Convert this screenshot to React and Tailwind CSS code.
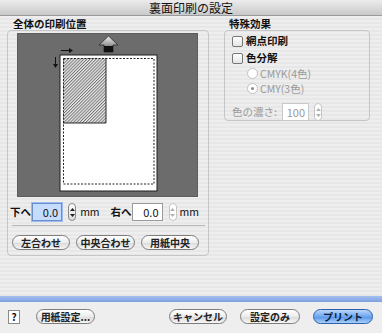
import React from "react";

const font = { fontFamily: '"Noto Sans CJK JP", "Liberation Sans", sans-serif' };

const Stepper = ({ dim }) => (
  <div
    className={`flex h-[18px] w-[8px] flex-col items-center justify-center gap-[3px] rounded-[4px] border ${
      dim ? "border-[#c4c4c4] bg-white" : "border-[#8a8a8a] bg-[linear-gradient(#fdfdfd,#dcdcdc)]"
    }`}
  >
    <svg width="5" height="3" viewBox="0 0 5 3">
      <path d="M0 3 L2.5 0 L5 3Z" fill={dim ? "#b0b0b0" : "#222"} />
    </svg>
    <svg width="5" height="3" viewBox="0 0 5 3">
      <path d="M0 0 L5 0 L2.5 3Z" fill={dim ? "#b0b0b0" : "#222"} />
    </svg>
  </div>
);

const Pill = ({ children, w, blue }) => (
  <button
    className={`flex h-[15px] items-center justify-center rounded-full border text-[10px] font-bold leading-none ${
      blue
        ? "border-[#2f5fa8] bg-[linear-gradient(#b9d6fb,#6fa6ee_50%,#5a98ea_55%,#a8d0fb)] text-[#0b1d3d]"
        : "border-[#7d7d7d] bg-[linear-gradient(#ffffff,#ececec_50%,#dcdcdc_55%,#f6f6f6)] text-[#222]"
    } ${w}`}
  >
    {children}
  </button>
);

const Preview = () => (
  <svg width="181" height="164" viewBox="0 0 181 164">
    <defs>
      <pattern id="hatch" width="2.2" height="2.2" patternUnits="userSpaceOnUse" patternTransform="rotate(45)">
        <rect width="2.2" height="2.2" fill="#ececec" />
        <line x1="0.5" y1="0" x2="0.5" y2="2.2" stroke="#6a6a6a" strokeWidth="0.9" />
      </pattern>
      <linearGradient id="arrow" x1="0" y1="0" x2="0" y2="1">
        <stop offset="0" stopColor="#f4f4f4" />
        <stop offset="0.55" stopColor="#9a9a9a" />
        <stop offset="1" stopColor="#1c1c1c" />
      </linearGradient>
    </defs>
    <rect x="42" y="21" width="97" height="136" fill="#fff" stroke="#1e1e1e" strokeWidth="1" />
    <rect x="45" y="24" width="43" height="65" fill="url(#hatch)" />
    <path d="M88 24 V89 H45" fill="none" stroke="#2a2a2a" strokeWidth="1" />
    <rect x="45.5" y="24.5" width="90.5" height="125.5" fill="none" stroke="#222" strokeWidth="1" strokeDasharray="2 1.5" />
    <path d="M90.5 2 L100 11 L95 11 L95 18 L86 18 L86 11 L81 11 Z" fill="url(#arrow)" stroke="#2a2a2a" strokeWidth="0.8" />
    <rect x="86" y="12" width="9" height="6" fill="#111" />
    <path d="M43 16.5 H53" stroke="#111" strokeWidth="1" />
    <path d="M51 14 L55 16.5 L51 19 Z" fill="#111" />
    <path d="M37.5 23 V32" stroke="#111" strokeWidth="1" />
    <path d="M35 30 L37.5 34 L40 30 Z" fill="#111" />
  </svg>
);

export default function App() {
  return (
    <div
      className="flex h-[333px] w-[382px] flex-col overflow-hidden bg-[repeating-linear-gradient(#eeeeee_0px,#eeeeee_2px,#e7e7e7_2px,#e7e7e7_4px)] text-[11px] text-[#111]"
      style={font}
    >
      <div className="flex h-[16px] items-center justify-center border-b border-[#9a9a9a] bg-[linear-gradient(#ececec,#c9c9c9)] text-[12px] leading-none text-[#111]">
        裏面印刷の設定
      </div>

      <div className="flex flex-1 gap-[15px] pl-[7px] pt-[1px]">
        <div className="flex w-[202px] flex-col">
          <div className="h-[13px] pl-[6px] text-[10.5px] font-bold leading-[13px]">全体の印刷位置</div>
          <div className="flex h-[226px] flex-col rounded-[4px] border border-[#c6c6c6] pl-[9px] pr-[9px] pt-[2px]">
            <div className="h-[164px] w-[181px] border border-[#5c5c5c] bg-[#6c6c6c]">
              <Preview />
            </div>
            <div className="mt-[6px] flex h-[18px] items-center whitespace-nowrap text-[10.5px]">
              <span className="ml-[-7px] w-[23px] font-bold">下へ</span>
              <div className="ml-[1px] flex h-[18px] w-[35px] items-center justify-end border border-[#6d8fc7] bg-[#c6dcff] pr-[3px] text-[11px] shadow-[0_0_0_1px_#9dbaf0]">
                0.0
              </div>
              <div className="ml-[6px]"><Stepper /></div>
              <span className="ml-[4px]">mm</span>
              <span className="ml-[11px] w-[23px] font-bold">右へ</span>
              <div className="flex h-[18px] w-[36px] items-center justify-end border border-[#9a9a9a] bg-white pr-[3px] text-[11px]">
                0.0
              </div>
              <div className="ml-[6px]"><Stepper dim /></div>
              <span className="ml-[3px]">mm</span>
            </div>
            <div className="ml-[-5px] mr-[-6px] mt-[4px] border-t border-[#b8b8b8]" />
            <div className="ml-[-5px] mt-[9px] flex gap-[6px]">
              <Pill w="w-[60px]">左合わせ</Pill>
              <Pill w="w-[61px]">中央合わせ</Pill>
              <Pill w="w-[60px]">用紙中央</Pill>
            </div>
          </div>
        </div>

        <div className="flex w-[146px] flex-col">
          <div className="h-[13px] pl-[5px] text-[10.5px] font-bold leading-[13px]">特殊効果</div>
          <div className="flex h-[91px] flex-col rounded-[4px] border border-[#c6c6c6] pl-[7px] pt-[3px] text-[10.5px]">
            <div className="flex h-[14px] items-center gap-[3px] font-bold">
              <span className="h-[11px] w-[11px] rounded-[2px] border border-[#777] bg-[linear-gradient(#ffffff,#e4e4e4)]" />
              網点印刷
            </div>
            <div className="mt-[3px] flex h-[14px] items-center gap-[3px] font-bold">
              <span className="h-[11px] w-[11px] rounded-[2px] border border-[#777] bg-[linear-gradient(#ffffff,#e4e4e4)]" />
              色分解
            </div>
            <div className="ml-[15px] mt-[1px] flex h-[15px] items-center gap-[2px] text-[#9a9a9a]">
              <span className="h-[11px] w-[11px] rounded-full border border-[#c2c2c2] bg-white" />
              CMYK(4色)
            </div>
            <div className="ml-[15px] flex h-[15px] items-center gap-[2px] text-[#9a9a9a]">
              <span className="flex h-[11px] w-[11px] items-center justify-center rounded-full border border-[#c2c2c2] bg-white">
                <span className="h-[3px] w-[3px] rounded-full bg-[#8a8a8a]" />
              </span>
              CMY(3色)
            </div>
            <div className="mt-[7px] flex h-[18px] items-center text-[#9a9a9a]">
              <span className="w-[50px]">色の濃さ:</span>
              <div className="flex h-[18px] w-[27px] items-center justify-end border border-[#c8c8c8] bg-white pr-[3px] text-[11px]">
                100
              </div>
              <div className="ml-[5px]"><Stepper dim /></div>
            </div>
          </div>
        </div>
      </div>

      <div className="h-[6px] bg-[linear-gradient(#a6bff0,#7d9fe0)]" />
      <div className="flex h-[31px] items-center bg-[#eeeeee] pb-[2px] pl-[8px] pr-[9px]">
        <div className="flex h-[14px] w-[12px] items-center justify-center border border-[#8a8a8a] bg-white text-[10px] font-bold leading-none">
          ?
        </div>
        <div className="ml-[16px]"><Pill w="w-[59px]">用紙設定...</Pill></div>
        <div className="ml-auto flex gap-[13px]">
          <Pill w="w-[58px]">キャンセル</Pill>
          <Pill w="w-[60px]">設定のみ</Pill>
          <Pill w="w-[60px]" blue>プリント</Pill>
        </div>
      </div>
    </div>
  );
}
